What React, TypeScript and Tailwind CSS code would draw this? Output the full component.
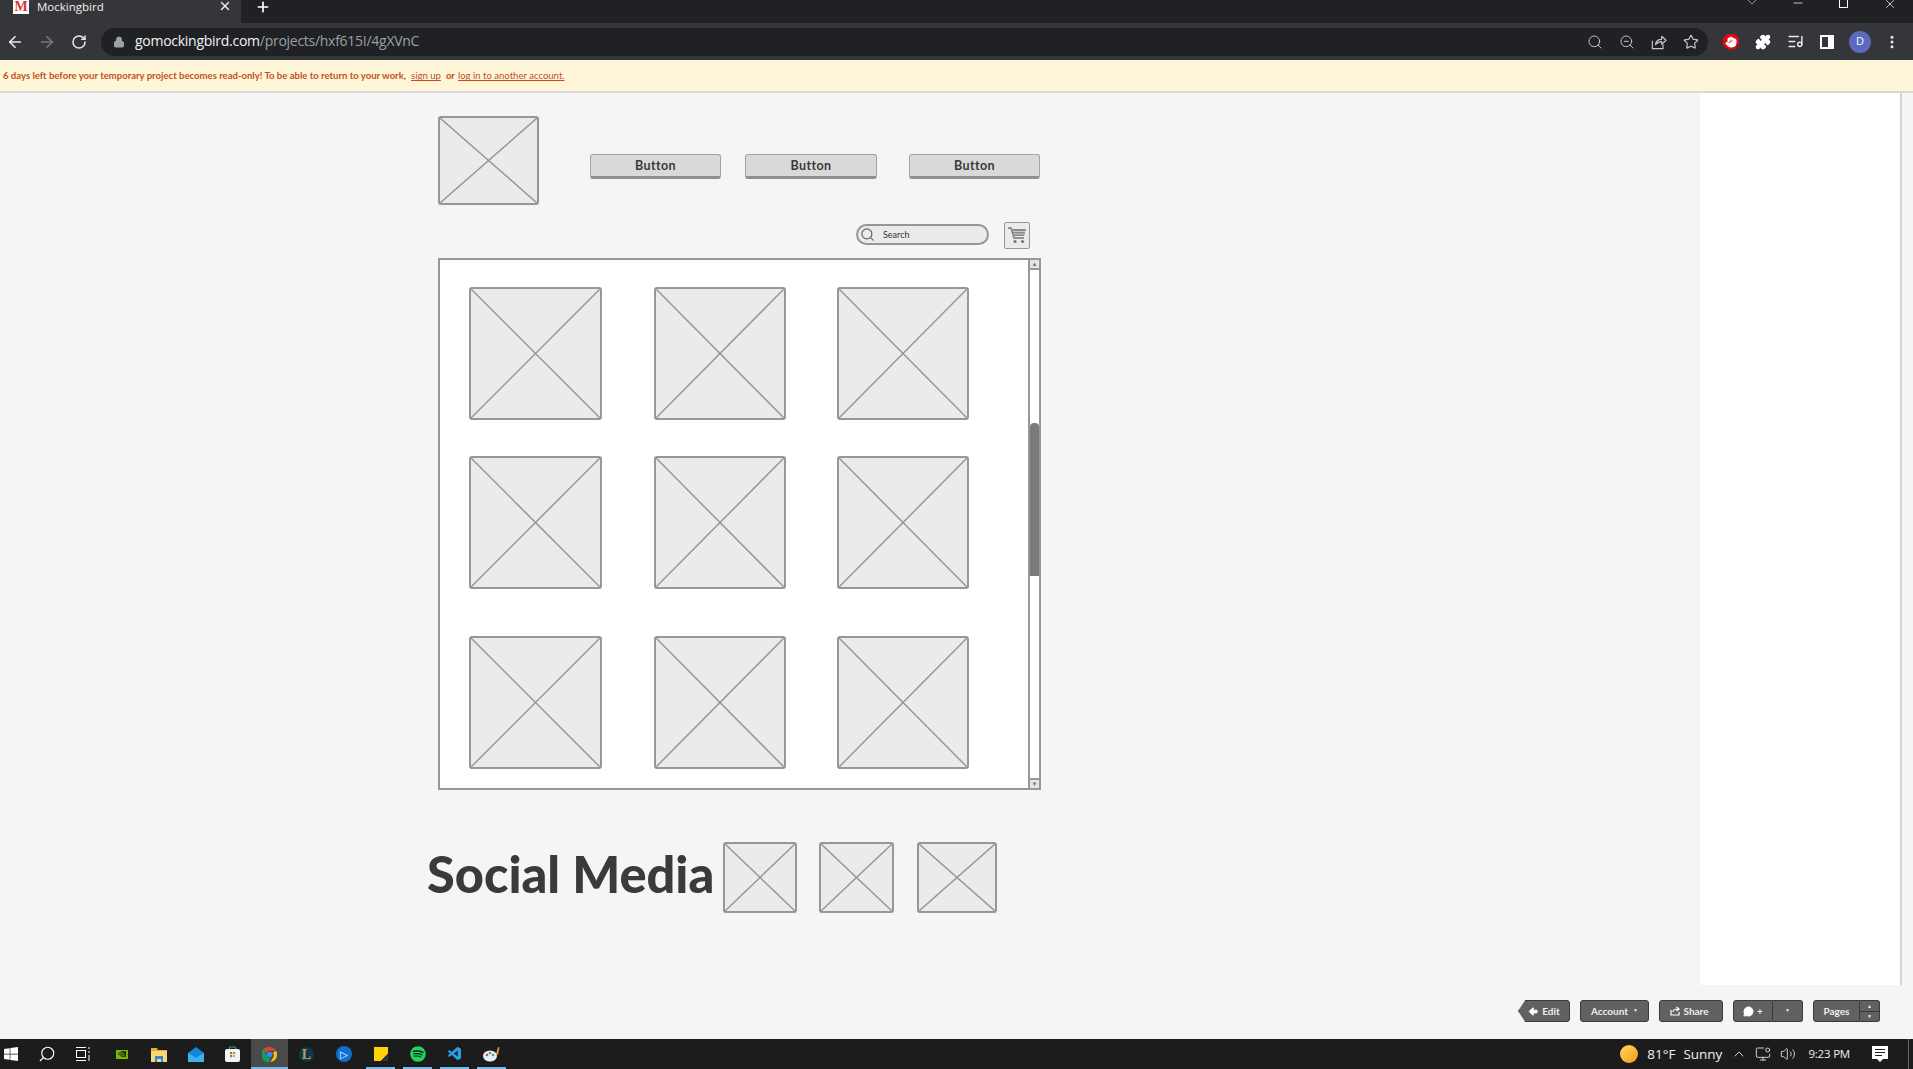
import { ArrowLeft, ArrowRight, RotateCw, Lock, Search, ZoomOut, Star, Puzzle, ListMusic, EllipsisVertical, X, Plus, ChevronDown, Minus, ChevronUp, Volume2, MonitorDot, Hand, ArrowBigLeft, MessageCircle } from 'lucide-react';
import { FaWindows, FaSpotify } from 'react-icons/fa';
import { VscVscode } from 'react-icons/vsc';
import { SiNvidia } from 'react-icons/si';

function Placeholder({ className }: { className: string }) {
    return (
        <div className={`shrink-0 rounded-[3px] border-2 border-[#979797] bg-[#ebebeb] ${className}`}>
            <svg className="block h-full w-full" viewBox="0 0 100 100" preserveAspectRatio="none">
                <line x1="0" y1="0" x2="100" y2="100" stroke="#979797" strokeWidth="1.5" vectorEffect="non-scaling-stroke" />
                <line x1="100" y1="0" x2="0" y2="100" stroke="#979797" strokeWidth="1.5" vectorEffect="non-scaling-stroke" />
            </svg>
        </div>
    );
}

function WireButton({ className }: { className: string }) {
    return (
        <div className={`flex h-[25px] shrink-0 items-center justify-center rounded-[3px] border border-[#a3a3a3] border-b-[3px] border-b-[#8f8f8f] bg-[#d9d9d9] pt-[2px] font-['Lato',sans-serif] text-[12.5px] font-bold tracking-[0.4px] text-[#3a3a3a] ${className}`}>
            Button
        </div>
    );
}

function BarButton({ className, children }: { className: string; children: React.ReactNode }) {
    return (
        <div className={`flex h-[22px] shrink-0 items-center justify-center rounded-[3px] border border-[#3a3a3a] bg-[#616161] font-['Lato',sans-serif] text-[10px] font-bold text-[#eeeeee] ${className}`}>
            {children}
        </div>
    );
}

function Slot({ children, active, running }: { children: React.ReactNode; active?: boolean; running?: boolean }) {
    return (
        <div className={`relative flex h-[30px] w-[37px] shrink-0 items-center justify-center ${active ? 'bg-[#4a4a4a]' : ''}`}>
            {children}
            {(active || running) && <div className={`absolute bottom-0 h-[2px] bg-[#76b9ed] ${active ? 'inset-x-0' : 'inset-x-[4px]'}`} />}
        </div>
    );
}

const gridCols = ['w-[133px]', 'ml-[52px] w-[132px]', 'ml-[51px] w-[132px]'];

export default function App() {
    return (
        <div className="flex h-[1069px] w-[1913px] flex-col overflow-hidden bg-[#f5f5f5] font-['Open_Sans',sans-serif]">
            {/* Tab strip */}
            <div className="flex h-[23px] shrink-0 items-start bg-[#202124] text-white">
                <div className="flex h-[23px] w-[241px] items-start bg-[#35363a] pl-[13px]">
                    <div className="flex h-[16px] w-[16px] -translate-y-[2px] items-center justify-center bg-white font-['Liberation_Serif',serif] text-[14px] font-bold text-[#d9382e]">M</div>
                    <span className="ml-[8px] text-[11.5px] leading-[13px] text-[#f1f1f1]">Mockingbird</span>
                    <X size={14} strokeWidth={2.5} className="ml-auto mr-[9px] -translate-y-px text-[#e8e8e8]" />
                </div>
                <Plus size={16} strokeWidth={2.5} className="ml-[14px] -translate-y-px" />
                <div className="ml-auto flex text-white">
                    <ChevronDown size={16} strokeWidth={1} className="mr-[31px] -translate-y-[6px] text-[#cccccc]" />
                    <Minus size={14} strokeWidth={1.25} className="mr-[34px] -translate-y-[4px]" />
                    <div className="mr-[35px] h-[9px] w-[9px] -translate-y-[1px] border border-white" />
                    <X size={14} strokeWidth={1.25} className="mr-[16px] -translate-y-[3px]" />
                </div>
            </div>

            {/* Toolbar */}
            <div className="flex h-[37px] shrink-0 items-center bg-[#35363a] text-[#e8eaed]">
                <ArrowLeft size={18} strokeWidth={2.25} className="ml-[6px]" />
                <ArrowRight size={18} strokeWidth={2.25} className="ml-[14px] text-[#77787a]" />
                <RotateCw size={16} strokeWidth={2.25} className="ml-[15px]" />
                <div className="ml-[14px] flex h-[28px] w-[1607px] items-center rounded-full bg-[#202124] pl-[12px]">
                    <Lock size={12} className="fill-[#9aa0a6] text-[#9aa0a6]" />
                    <span className="ml-[10px] -translate-y-px text-[14px] tracking-[-0.27px] text-[#f1f3f4]">gomockingbird.com<span className="text-[#9aa0a6]">/projects/hxf615I/4gXVnC</span></span>
                    <div className="ml-auto flex items-center gap-[16px] pr-[9px] text-[#c4c7ca]">
                        <Search size={16} strokeWidth={1.5} />
                        <ZoomOut size={16} strokeWidth={1.5} />
                        <svg width="16" height="16" viewBox="0 0 18 18" fill="none" stroke="currentColor" strokeWidth="1.3" strokeLinejoin="round">
                            <path d="M1.5 7.5v9h12v-5" />
                            <path d="M5 12c.5-4 3-6 7-6V2.5L17 7l-5 4.5V8.5c-3 0-5 1-7 3.5z" />
                        </svg>
                        <Star size={16} strokeWidth={1.75} />
                    </div>
                </div>
                <div className="ml-[15px] flex h-[16px] w-[16px] items-center justify-center bg-[#e30613] [clip-path:polygon(30%_0,70%_0,100%_30%,100%_70%,70%_100%,30%_100%,0_70%,0_30%)]">
                    <Hand size={12} className="fill-white text-white" />
                </div>
                <Puzzle size={16} className="ml-[16px] fill-white text-white" />
                <ListMusic size={17} className="ml-[16px]" />
                <div className="ml-[16px] flex h-[14px] w-[14px] border-2 border-white bg-white">
                    <div className="h-full w-[6px] bg-[#35363a]" />
                </div>
                <div className="ml-[15px] flex h-[22px] w-[22px] items-center justify-center rounded-full bg-[#5c6bc0] text-[11px] text-white">D</div>
                <EllipsisVertical size={16} strokeWidth={2.5} className="ml-[13px]" />
            </div>

            {/* Banner */}
            <div className="flex h-[33px] shrink-0 items-center gap-[5px] border-b-2 border-[#d8d8d8] bg-[#fff6da] pl-[3px] pt-[2px] font-['Lato',sans-serif] text-[9.55px] font-bold text-[#c2501a]">
                <span>6 days left before your temporary project becomes read-only! To be able to return to your work,</span>
                <span className="font-normal underline">sign up</span>
                <span>or</span>
                <span className="-ml-[2px] font-normal underline">log in to another account.</span>
            </div>

            {/* Page */}
            <div className="flex h-[892px] shrink-0">
                <div className="flex w-[1700px] flex-col pl-[438px] pt-[23px]">
                    <div className="flex items-start">
                        <Placeholder className="h-[89px] w-[101px]" />
                        <WireButton className="ml-[51px] mt-[38px] w-[131px]" />
                        <WireButton className="ml-[24px] mt-[38px] w-[132px]" />
                        <WireButton className="ml-[32px] mt-[38px] w-[131px]" />
                    </div>

                    <div className="mt-[17px] flex w-[602px] items-start justify-end pr-[10px]">
                        <div className="mt-[2px] flex h-[21px] w-[133px] items-center rounded-full border-2 border-[#979797] bg-[#ebebeb] pl-[2px] font-['Lato',sans-serif] text-[9px] text-[#333333]">
                            <Search size={15} strokeWidth={2} className="text-[#666666]" />
                            <span className="ml-[8px]">Search</span>
                        </div>
                        <div className="ml-[15px] flex h-[27px] w-[26px] items-center justify-center rounded-[2px] border border-[#979797] bg-[#ebebeb]">
                            <svg width="18" height="17" viewBox="0 0 18 17">
                                <path d="M0 1h3l3 10h10" fill="none" stroke="#777777" strokeWidth="1.3" />
                                <path d="M4 2h14l-2 7H6z" fill="#8a8a8a" />
                                <path d="M5 4.5h12M5.5 7h11" stroke="#ebebeb" strokeWidth="0.7" />
                                <circle cx="7" cy="14.5" r="1.6" fill="#777777" />
                                <circle cx="14.5" cy="14.5" r="1.6" fill="#777777" />
                            </svg>
                        </div>
                    </div>

                    <div className="mt-[9px] flex h-[532px] w-[603px] border-2 border-[#979797] bg-white">
                        <div className="flex-1 pl-[29px] pt-[27px]">
                            {['h-[133px]', 'mt-[36px] h-[133px]', 'mt-[47px] h-[133px]'].map((rowClass) => (
                                <div key={rowClass} className={`flex ${rowClass}`}>
                                    {gridCols.map((colClass) => (
                                        <Placeholder key={colClass} className={colClass} />
                                    ))}
                                </div>
                            ))}
                        </div>
                        {/* Scrollbar */}
                        <div className="flex w-[11px] flex-col border-l-2 border-[#979797] bg-white">
                            <div className="flex h-[10px] items-center justify-center border-b-2 border-[#979797] bg-[#e4e4e4] text-[6px] leading-none text-[#777777]">▲</div>
                            <div className="mt-[153px] h-[153px] rounded-t-[4px] bg-[#7a7a7a]" />
                            <div className="mt-auto flex h-[10px] items-center justify-center border-t-2 border-[#979797] bg-[#e4e4e4] text-[6px] leading-none text-[#777777]">▼</div>
                        </div>
                    </div>

                    <div className="-ml-[11px] mt-[52px] flex items-center">
                        <span className="w-[296px] whitespace-nowrap pb-[8px] font-['Lato',sans-serif] text-[50.5px] font-black leading-[62px] text-[#3a3a3a]">Social Media</span>
                        <Placeholder className="h-[71px] w-[74px]" />
                        <Placeholder className="ml-[22px] h-[71px] w-[75px]" />
                        <Placeholder className="ml-[23px] h-[71px] w-[80px]" />
                    </div>
                </div>
                <div className="w-[202px] border-r-2 border-[#d4d4d4] bg-white" />
            </div>

            {/* Mockingbird action bar */}
            <div className="flex h-[54px] shrink-0 justify-end gap-[10px] pr-[33px] pt-[15px]">
                <BarButton className="w-[52px] gap-[3px] [clip-path:polygon(14%_0,100%_0,100%_100%,14%_100%,0_50%)]">
                    <ArrowBigLeft size={11} className="fill-white text-white" /> Edit
                </BarButton>
                <BarButton className="w-[69px] gap-[5px]">
                    Account <span className="text-[5px]">▼</span>
                </BarButton>
                <BarButton className="w-[64px] gap-[3px] pr-[3px]">
                    <svg width="10" height="10" viewBox="0 0 10 10" fill="none" stroke="white" strokeWidth="1.2">
                        <path d="M1 4v5h8V6" />
                        <path d="M3 6c0-2 2-3 5-3M6.5 1 9 3 6.5 5" />
                    </svg>
                    Share
                </BarButton>
                <div className="flex">
                    <BarButton className="w-[40px] gap-[3px] rounded-r-none">
                        <MessageCircle size={11} className="fill-white text-white" /> +
                    </BarButton>
                    <BarButton className="w-[30px] rounded-l-none border-l-0">
                        <span className="text-[5px]">▼</span>
                    </BarButton>
                </div>
                <div className="flex">
                    <BarButton className="w-[47px] rounded-r-none">Pages</BarButton>
                    <div className="flex h-[22px] w-[20px] flex-col items-center justify-center rounded-r-[3px] border border-l-0 border-[#3a3a3a] bg-[#616161] text-[5px] leading-[9px] text-[#eeeeee]">
                        <span>▲</span>
                        <span className="h-px w-full bg-[#3a3a3a]" />
                        <span>▼</span>
                    </div>
                </div>
            </div>

            {/* Taskbar */}
            <div className="flex h-[30px] shrink-0 items-center bg-[#1c1c1c] text-white">
                <div className="flex w-[22px] justify-center"><FaWindows size={16} /></div>
                <div className="ml-[5px] flex w-[40px] justify-center"><Search size={18} strokeWidth={1.5} className="-scale-x-100" /></div>
                <div className="flex w-[32px] justify-center">
                    <svg width="16" height="16" viewBox="0 0 16 16" fill="none" stroke="white" strokeWidth="1">
                        <rect x="1.5" y="4.5" width="9" height="7" />
                        <path d="M1 1.5h10M1 14.5h10M14 1v2M14 5v2M14 9v6" />
                    </svg>
                </div>
                <div className="ml-[4px] flex">
                    <Slot>
                        <div className="flex h-[9px] w-[12px] items-center justify-center bg-[#76b900]"><SiNvidia size={8} className="text-[#1c1c1c]" /></div>
                    </Slot>
                    <Slot>
                        <svg width="16" height="15" viewBox="0 0 16 15">
                            <path d="M0 1h6l1 2h9v3H0z" fill="#e8a93a" />
                            <path d="M0 4h16v11H0z" fill="#f8d775" />
                            <path d="M4 9h8v6h-2v-3H6v3H4z" fill="#2f88d0" />
                        </svg>
                    </Slot>
                    <Slot>
                        <svg width="16" height="15" viewBox="0 0 16 15">
                            <path d="M0 6 8 0l8 6v9H0z" fill="#1488d8" />
                            <path d="M0 6l8 5 8-5v9H0z" fill="#3fb1ec" />
                        </svg>
                    </Slot>
                    <Slot>
                        <svg width="15" height="16" viewBox="0 0 15 16">
                            <rect x="0" y="3" width="15" height="13" rx="2" fill="#f3f3f3" />
                            <path d="M4.5 3V1h6v2" stroke="#2aa7a0" fill="none" />
                            <rect x="5" y="6" width="2.2" height="2.2" fill="#e74c2b" />
                            <rect x="8" y="6" width="2.2" height="2.2" fill="#7cb82f" />
                            <rect x="5" y="9" width="2.2" height="2.2" fill="#1e9be0" />
                            <rect x="8" y="9" width="2.2" height="2.2" fill="#f5b50f" />
                        </svg>
                    </Slot>
                    <Slot active>
                        <svg width="15" height="15" viewBox="0 0 16 16">
                            <path d="M8 0a8 8 0 0 1 7 4H8a4 4 0 0 0-3.6 2.2L1.7 2A8 8 0 0 1 8 0z" fill="#db4437" />
                            <path d="M15 4a8 8 0 0 1-6 12l3-5.2A4 4 0 0 0 11.5 6L15 4z" fill="#f4c20d" />
                            <path d="M1.7 2l3.2 6.2A4 4 0 0 0 9 12l-1 4A8 8 0 0 1 1.7 2z" fill="#0f9d58" />
                            <circle cx="8" cy="8" r="3" fill="#4285f4" />
                        </svg>
                    </Slot>
                    <Slot>
                        <div className="flex h-[15px] w-[15px] items-center justify-center rounded-full bg-[#0d3a4a] font-['Liberation_Serif',serif] text-[14px] font-bold text-[#c49a4a]">L</div>
                    </Slot>
                    <Slot>
                        <div className="flex h-[16px] w-[16px] items-center justify-center rounded-full bg-[#0f6fd1] text-[10px] leading-none text-white">▷</div>
                    </Slot>
                    <Slot running>
                        <div className="h-[14px] w-[14px] bg-[linear-gradient(135deg,#ffd400_75%,#333333_75%)]" />
                    </Slot>
                    <Slot running>
                        <FaSpotify size={16} className="text-[#1ed760]" />
                    </Slot>
                    <Slot running>
                        <VscVscode size={16} className="text-[#23a2ea]" />
                    </Slot>
                    <Slot running>
                        <svg width="17" height="16" viewBox="0 0 17 16">
                            <ellipse cx="7" cy="10" rx="7" ry="5.5" fill="#e8eef5" />
                            <circle cx="4" cy="9" r="1.3" fill="#d9483b" />
                            <circle cx="7" cy="7" r="1.3" fill="#3c8de0" />
                            <circle cx="10" cy="9" r="1.3" fill="#5bb04a" />
                            <path d="M13 8 15 1l1.5.5L15 9z" fill="#e8963a" />
                        </svg>
                    </Slot>
                </div>
                <div className="ml-auto flex items-center text-[#f0f0f0]">
                    <div className="h-[18px] w-[18px] rounded-full bg-[linear-gradient(135deg,#ffd95a,#f79a1c)]" />
                    <span className="ml-[9px] text-[13.5px]">81°F</span>
                    <span className="ml-[8px] text-[13.5px]">Sunny</span>
                    <ChevronUp size={16} strokeWidth={1.25} className="ml-[9px]" />
                    <MonitorDot size={16} strokeWidth={1.25} className="ml-[8px]" />
                    <Volume2 size={16} strokeWidth={1.25} className="ml-[9px]" />
                    <span className="ml-[12px] text-[11.5px] tracking-[-0.2px]">9:23 PM</span>
                    <svg width="16" height="17" viewBox="0 0 16 17" className="ml-[22px]">
                        <path d="M0 0h16v13h-5l-3 3-3-3H0z" fill="white" />
                        <path d="M3 3.5h10M3 6.5h10M3 9.5h7" stroke="#1c1c1c" />
                    </svg>
                    <div className="ml-[20px] h-[30px] w-px bg-[#666666]" />
                    <div className="w-[4px]" />
                </div>
            </div>
        </div>
    );
}
